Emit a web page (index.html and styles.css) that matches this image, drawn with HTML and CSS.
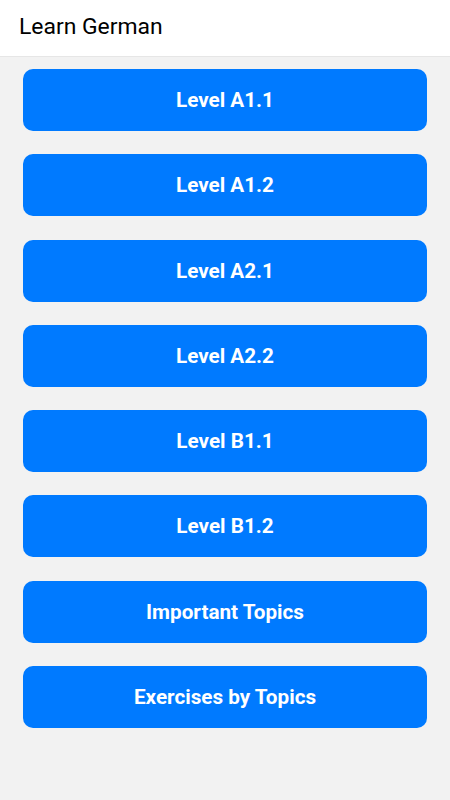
FILE: index.html
```html
<!DOCTYPE html>
<html>
<head>
<meta charset="utf-8">
<link rel="stylesheet" href="styles.css">
</head>
<body>
<header class="appbar"><h1 class="title">Learn German</h1></header>
<main class="list">
  <button class="btn">Level A1.1</button>
  <button class="btn">Level A1.2</button>
  <button class="btn">Level A2.1</button>
  <button class="btn">Level A2.2</button>
  <button class="btn">Level B1.1</button>
  <button class="btn">Level B1.2</button>
  <button class="btn">Important Topics</button>
  <button class="btn">Exercises by Topics</button>
</main>
</body>
</html>
```
FILE: styles.css
```css
html, body {
  margin: 0;
  padding: 0;
  height: 100%;
}
body {
  background: #f2f2f2;
  font-family: Roboto, "Liberation Sans", sans-serif;
}
.appbar {
  height: 57px;
  background: #ffffff;
  border-bottom: 1px solid #e6e6e6;
  box-sizing: border-box;
  display: flex;
  align-items: center;
  padding-left: 19px;
}
.title {
  margin: 0;
  font-size: 22.9px;
  font-weight: 400;
  color: #000;
  position: relative;
  top: -2px;
}
.list {
  display: flex;
  flex-direction: column;
  gap: 23.3px;
  padding: 12px 23px 0 23px;
}
.btn {
  height: 62px;
  border: none;
  border-radius: 10px;
  background: #007aff;
  color: #fff;
  font-family: Roboto, "Liberation Sans", sans-serif;
  font-weight: 700;
  font-size: 20.7px;
  padding: 0;
  text-align: center;
}
```
